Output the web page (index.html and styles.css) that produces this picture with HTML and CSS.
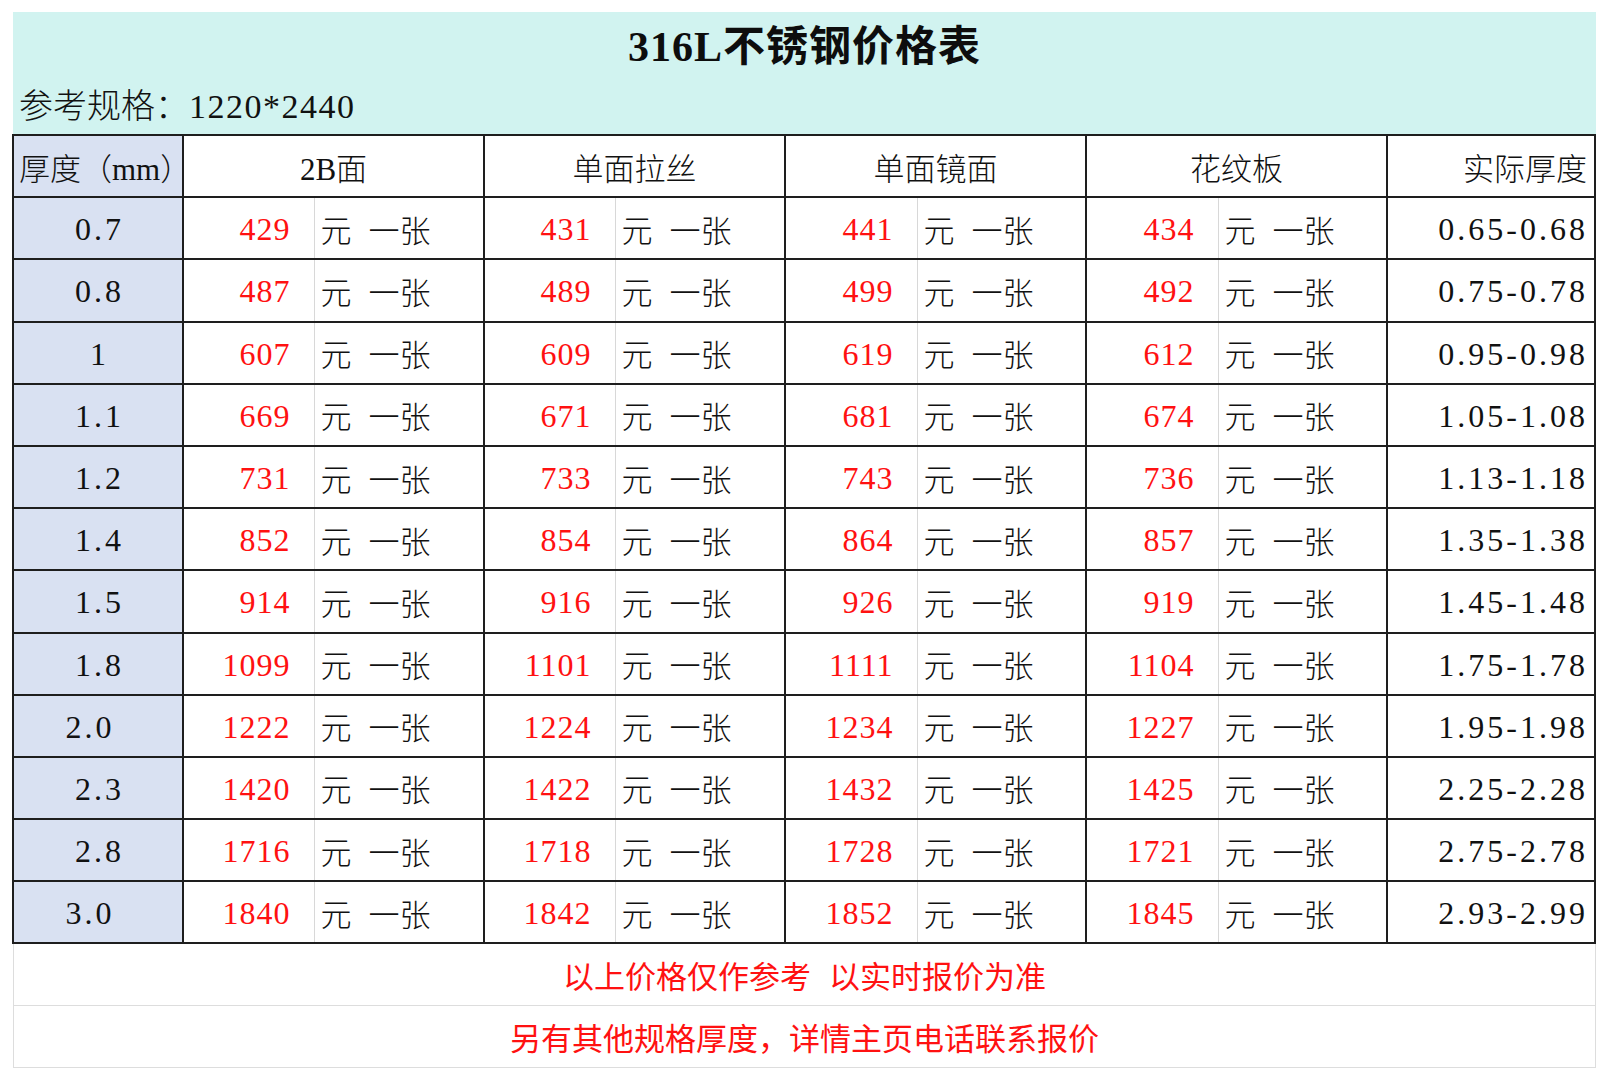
FILE: index.html
```html
<!DOCTYPE html>
<html lang="zh-CN">
<head>
<meta charset="utf-8">
<title>316L不锈钢价格表</title>
<link rel="stylesheet" href="styles.css">
</head>
<body>
<div class="sheet">
  <div class="banner">
    <div class="title">316L不锈钢价格表</div>
    <div class="spec">参考规格：<span class="spec-num">1220*2440</span></div>
  </div>
  <table class="price-table">
    <colgroup>
      <col class="c-size">
      <col class="c-num"><col class="c-unit">
      <col class="c-num"><col class="c-unit">
      <col class="c-num2"><col class="c-unit2">
      <col class="c-num2"><col class="c-unit2">
      <col class="c-real">
    </colgroup>
    <thead>
      <tr>
        <th class="h-size">厚度（mm）</th>
        <th colspan="2">2B面</th>
        <th colspan="2">单面拉丝</th>
        <th colspan="2">单面镜面</th>
        <th colspan="2">花纹板</th>
        <th class="h-real">实际厚度</th>
      </tr>
    </thead>
    <tbody>
      <tr><td class="size">0.7</td><td class="num">429</td><td class="unit">元<span class="per">一张</span></td><td class="num">431</td><td class="unit">元<span class="per">一张</span></td><td class="num">441</td><td class="unit">元<span class="per">一张</span></td><td class="num">434</td><td class="unit">元<span class="per">一张</span></td><td class="real">0.65-0.68</td></tr>
      <tr><td class="size">0.8</td><td class="num">487</td><td class="unit">元<span class="per">一张</span></td><td class="num">489</td><td class="unit">元<span class="per">一张</span></td><td class="num">499</td><td class="unit">元<span class="per">一张</span></td><td class="num">492</td><td class="unit">元<span class="per">一张</span></td><td class="real">0.75-0.78</td></tr>
      <tr><td class="size">1</td><td class="num">607</td><td class="unit">元<span class="per">一张</span></td><td class="num">609</td><td class="unit">元<span class="per">一张</span></td><td class="num">619</td><td class="unit">元<span class="per">一张</span></td><td class="num">612</td><td class="unit">元<span class="per">一张</span></td><td class="real">0.95-0.98</td></tr>
      <tr><td class="size">1.1</td><td class="num">669</td><td class="unit">元<span class="per">一张</span></td><td class="num">671</td><td class="unit">元<span class="per">一张</span></td><td class="num">681</td><td class="unit">元<span class="per">一张</span></td><td class="num">674</td><td class="unit">元<span class="per">一张</span></td><td class="real">1.05-1.08</td></tr>
      <tr><td class="size">1.2</td><td class="num">731</td><td class="unit">元<span class="per">一张</span></td><td class="num">733</td><td class="unit">元<span class="per">一张</span></td><td class="num">743</td><td class="unit">元<span class="per">一张</span></td><td class="num">736</td><td class="unit">元<span class="per">一张</span></td><td class="real">1.13-1.18</td></tr>
      <tr><td class="size">1.4</td><td class="num">852</td><td class="unit">元<span class="per">一张</span></td><td class="num">854</td><td class="unit">元<span class="per">一张</span></td><td class="num">864</td><td class="unit">元<span class="per">一张</span></td><td class="num">857</td><td class="unit">元<span class="per">一张</span></td><td class="real">1.35-1.38</td></tr>
      <tr><td class="size">1.5</td><td class="num">914</td><td class="unit">元<span class="per">一张</span></td><td class="num">916</td><td class="unit">元<span class="per">一张</span></td><td class="num">926</td><td class="unit">元<span class="per">一张</span></td><td class="num">919</td><td class="unit">元<span class="per">一张</span></td><td class="real">1.45-1.48</td></tr>
      <tr><td class="size">1.8</td><td class="num">1099</td><td class="unit">元<span class="per">一张</span></td><td class="num">1101</td><td class="unit">元<span class="per">一张</span></td><td class="num">1111</td><td class="unit">元<span class="per">一张</span></td><td class="num">1104</td><td class="unit">元<span class="per">一张</span></td><td class="real">1.75-1.78</td></tr>
      <tr><td class="size shift">2.0</td><td class="num">1222</td><td class="unit">元<span class="per">一张</span></td><td class="num">1224</td><td class="unit">元<span class="per">一张</span></td><td class="num">1234</td><td class="unit">元<span class="per">一张</span></td><td class="num">1227</td><td class="unit">元<span class="per">一张</span></td><td class="real">1.95-1.98</td></tr>
      <tr><td class="size">2.3</td><td class="num">1420</td><td class="unit">元<span class="per">一张</span></td><td class="num">1422</td><td class="unit">元<span class="per">一张</span></td><td class="num">1432</td><td class="unit">元<span class="per">一张</span></td><td class="num">1425</td><td class="unit">元<span class="per">一张</span></td><td class="real">2.25-2.28</td></tr>
      <tr><td class="size">2.8</td><td class="num">1716</td><td class="unit">元<span class="per">一张</span></td><td class="num">1718</td><td class="unit">元<span class="per">一张</span></td><td class="num">1728</td><td class="unit">元<span class="per">一张</span></td><td class="num">1721</td><td class="unit">元<span class="per">一张</span></td><td class="real">2.75-2.78</td></tr>
      <tr><td class="size shift">3.0</td><td class="num">1840</td><td class="unit">元<span class="per">一张</span></td><td class="num">1842</td><td class="unit">元<span class="per">一张</span></td><td class="num">1852</td><td class="unit">元<span class="per">一张</span></td><td class="num">1845</td><td class="unit">元<span class="per">一张</span></td><td class="real">2.93-2.99</td></tr>
    </tbody>
  </table>
  <div class="note">以上价格仅作参考<span class="note-gap">以实时报价为准</span></div>
  <div class="note">另有其他规格厚度，详情主页电话联系报价</div>
</div>
</body>
</html>
```
FILE: styles.css
```css
html, body {
  margin: 0;
  padding: 0;
  background: #ffffff;
}

body {
  font-family: "Liberation Serif", "Noto Sans CJK SC", serif;
  color: #111111;
}

.sheet {
  margin: 12px 0 0 12px;
  width: 1584px;
}

.banner {
  background: #d1f3f0;
  height: 122px;
  display: flex;
  flex-direction: column;
  margin-left: 1px;
}

.title {
  text-align: center;
  font-weight: bold;
  font-size: 42px;
  line-height: 50px;
  margin-top: 10px;
  letter-spacing: 1px;
  color: #0d0d0d;
}

.spec {
  font-size: 34px;
  line-height: 40px;
  margin-top: 15px;
  padding-left: 6px;
  font-weight: 300;
}

.spec-num {
  letter-spacing: 1.5px;
}

.price-table {
  border-collapse: collapse;
  table-layout: fixed;
  width: 1584px;
}

.c-size { width: 170px; }
.c-num { width: 131px; }
.c-unit { width: 170px; }
.c-num2 { width: 132px; }
.c-unit2 { width: 169px; }
.c-real { width: 208px; }

.price-table tr {
  height: 62.2px;
}

.price-table th,
.price-table td {
  border: 2px solid #1e1e1e;
  padding: 0;
  font-weight: 300;
  font-size: 31px;
  white-space: nowrap;
  overflow: visible;
}

.price-table th {
  text-align: center;
}

.price-table th.h-size {
  text-align: left;
  padding-left: 5px;
  background: #d9e1f2;
}

.price-table th.h-real {
  text-align: right;
  padding-right: 7px;
}

.price-table td.size {
  background: #d9e1f2;
  text-align: center;
  font-size: 32px;
  letter-spacing: 3px;
  padding-left: 3px;
  padding-top: 3px;
}

.price-table td.size.shift {
  padding-left: 0;
  padding-right: 16px;
}

.price-table td.num {
  text-align: right;
  padding-right: 23px;
  padding-top: 3px;
  color: #ff1111;
  font-size: 32px;
  letter-spacing: 1px;
  border-right: 1px solid #d8d8d8;
}

.price-table td.unit {
  text-align: left;
  padding-left: 6px;
  border-left: 1px solid #d8d8d8;
}

.per {
  margin-left: 17px;
}

.price-table td.real {
  text-align: right;
  padding-right: 6px;
  padding-top: 3px;
  font-size: 32px;
  letter-spacing: 3px;
}

.note {
  height: 62px;
  box-sizing: border-box;
  border: 1px solid #dddddd;
  border-top: none;
  display: flex;
  align-items: center;
  justify-content: center;
  color: #ff1111;
  font-size: 31px;
  margin-left: 1px;
}

.note-gap {
  margin-left: 18px;
}
```
